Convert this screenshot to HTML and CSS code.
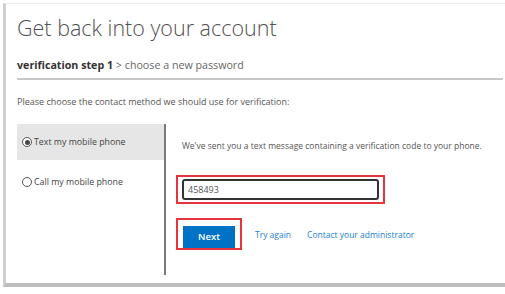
FILE: index.html
```html
<!DOCTYPE html>
<html>
<head>
<meta charset="utf-8">
<link rel="stylesheet" href="styles.css">
</head>
<body>
<div class="card">
  <h1 class="title">Get back into your account</h1>
  <div class="steps"><span class="step-current">verification step 1</span> &gt; choose a new password</div>
  <p class="prompt">Please choose the contact method we should use for verification:</p>
  <div class="methods">
    <div class="options">
      <div class="option selected"><span class="radio checked"></span>Text my mobile phone</div>
      <div class="option second"><span class="radio"></span>Call my mobile phone</div>
    </div>
    <div class="detail">
      <p class="sent">We've sent you a text message containing a verification code to your phone.</p>
      <div class="hl hl-input"><div class="code">458493</div></div>
      <div class="actions">
        <div class="hl hl-btn"><button class="next">Next</button></div>
        <a class="link">Try again</a>
        <a class="link">Contact your administrator</a>
      </div>
    </div>
  </div>
</div>
</body>
</html>
```

FILE: styles.css
```css
html, body { margin: 0; padding: 0; background: #fff; }
body { font-family: "Open Sans", "Noto Sans", sans-serif; color: #333; }
.card {
  margin: 3px 0 0 3px;
  width: 489px;
  height: 279px;
  background: #fff;
  border-top: 1px solid #ececec;
  border-left: 3px solid #cfcfcf;
  border-right: 4px solid #bdbdbd;
  border-bottom: 4px solid #bdbdbd;
  padding: 0 8px 0 11px;
  box-sizing: content-box;
  display: flex;
  flex-direction: column;
}
.title {
  margin: 9px 0 0 0;
  font-weight: 300;
  font-size: 21.5px;
  line-height: 30px;
  color: #505050;
}
.steps {
  margin-top: 14px;
  font-size: 10.7px;
  line-height: 16px;
  color: #666;
  padding-bottom: 5px;
  border-bottom: 2px solid #c8c8c8;
  margin-right: 3px;
}
.step-current { font-weight: 700; color: #333; }
.prompt {
  margin: 16px 0 0 0;
  font-size: 9px;
  line-height: 12px;
  color: #555;
}
.methods {
  display: flex;
  margin-top: 16px;
  height: 151px;
}
.options {
  width: 147px;
  border-right: 2px solid #7a7a7a;
}
.option {
  height: 36px;
  display: flex;
  align-items: center;
  padding-left: 5px;
  font-size: 8.8px;
  color: #444;
}
.option.second { height: 44px; }
.option.selected { background: #e6e6e6; }
.radio {
  width: 10px; height: 10px;
  border: 1px solid #555;
  border-radius: 50%;
  margin-right: 2px;
  box-sizing: border-box;
  position: relative;
  flex: none;
  background: #fff;
}
.radio.checked::after {
  content: "";
  position: absolute;
  left: 1.5px; top: 1.5px;
  width: 5px; height: 5px;
  border-radius: 50%;
  background: #444;
}
.detail {
  padding-left: 10px;
  flex: 1;
}
.sent {
  margin: 16px 0 0 6px;
  font-size: 8.5px;
  line-height: 12px;
  color: #555;
}
.hl {
  border: 2px solid #e8323c;
  box-sizing: border-box;
}
.hl-input {
  margin-top: 23px;
  width: 209px;
  height: 29px;
  padding: 2px 4px;
}
.code {
  height: 21px;
  border: 2px solid #333;
  border-radius: 3px;
  box-sizing: border-box;
  font-size: 9px;
  line-height: 17px;
  padding-left: 4px;
  color: #555;
}
.actions {
  display: flex;
  align-items: center;
  margin-top: 14px;
}
.hl-btn {
  width: 66px;
  height: 32px;
  padding: 3px 5px;
}
.next {
  width: 100%;
  height: 100%;
  background: #0072c6;
  border: none;
  color: #fff;
  font-family: inherit;
  font-size: 9.5px;
  font-weight: 600;
  padding: 0;
}
.link {
  color: #1a7fd0;
  font-size: 8.5px;
  margin-left: 13px;
}
.link + .link { margin-left: 16px; }
```
